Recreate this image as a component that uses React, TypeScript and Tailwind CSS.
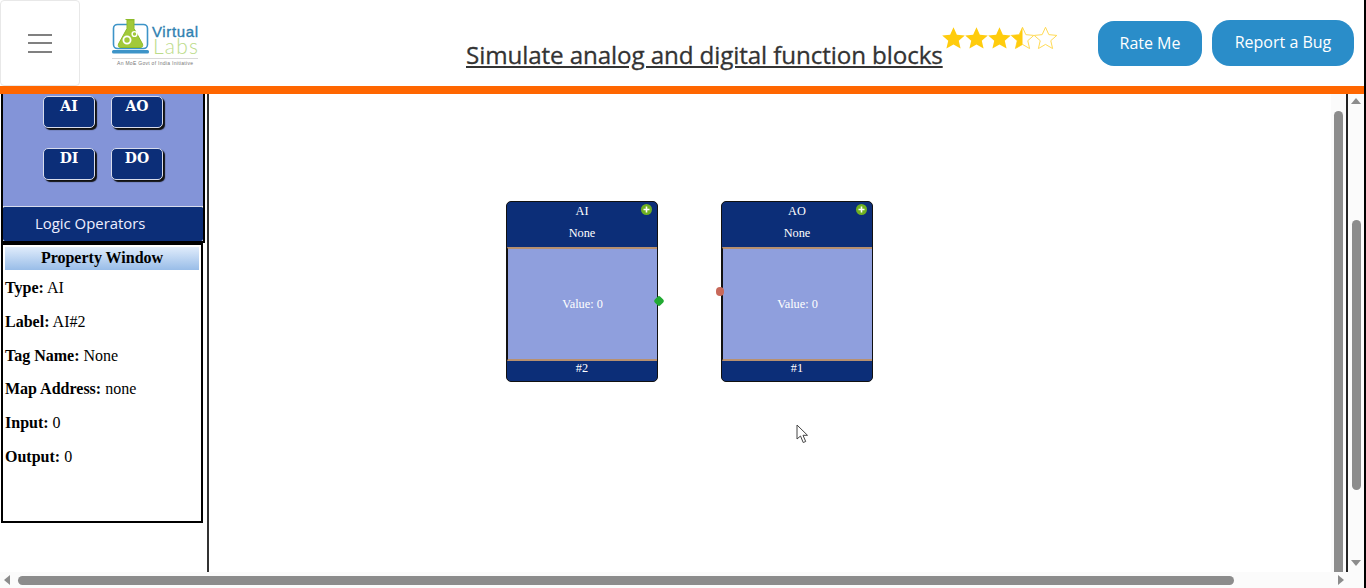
import React from "react";

const Star = ({ kind }: { kind: "full" | "half" | "empty" }) => {
  const d = "M12 0.8l3.5 7.7 8.3.8-6.3 5.5 1.9 8.2L12 18.7l-7.4 4.3 1.9-8.2L.2 9.3l8.3-.8z";
  return (
    <svg width="23" height="24" viewBox="0 0 24 24" className="shrink-0">
      <defs>
        <clipPath id="halfClip"><rect x="0" y="0" width="12" height="24" /></clipPath>
      </defs>
      {kind === "full" && <path d={d} fill="#ffcc0d" />}
      {kind !== "full" && <path d={d} fill="#fff" stroke="#ffd84d" strokeWidth="1" />}
      {kind === "half" && <path d={d} fill="#ffcc0d" clipPath="url(#halfClip)" />}
    </svg>
  );
};

const Logo = () => (
  <svg width="90" height="50" viewBox="0 0 90 50" className="shrink-0">
    <rect x="1.5" y="6.5" width="34" height="24" rx="4" fill="none" stroke="#3d94c8" strokeWidth="1.6" />
    <rect x="0" y="32" width="37" height="3.4" rx="1.5" fill="#3d94c8" />
    <path d="M13.5 1.5h9M15 2v8.5L6.5 26q-1 3.5 2.5 3.5h19q3.5 0 2.5-3.5L22 10.5V2z" fill="#a2c93a" stroke="#8dbb2b" strokeWidth="1" />
    <circle cx="15" cy="22" r="3.6" fill="none" stroke="#fff" strokeWidth="1.8" />
    <circle cx="22.5" cy="16" r="2.4" fill="none" stroke="#fff" strokeWidth="1.4" />
    <text x="40" y="19" fontFamily="'Liberation Sans', sans-serif" fontSize="15" fontWeight="400" fill="#2f7fb0" stroke="#2f7fb0" strokeWidth="0.35" textLength="46">Virtual</text>
    <text x="41" y="36" fontFamily="'Lato', sans-serif" fontSize="21" fontWeight="300" fill="#bcdc8a" textLength="45">Labs</text>
    <rect x="0" y="40" width="86" height="1" fill="#d9d9d9" />
    <text x="5" y="47" fontFamily="'Liberation Sans', sans-serif" fontSize="5" fill="#777" textLength="76">An MoE Govt of India Initiative</text>
  </svg>
);

const PaletteButton = ({ label }: { label: string }) => (
  <div className="w-[52px] h-[32px] rounded-[5px] bg-[#0c2e78] border border-[#d8dcec] shadow-[2px_2px_1px_#111] text-center text-white text-[14px] font-bold leading-[19px] font-['DejaVu_Serif',serif]">
    {label}
  </div>
);

const Prop = ({ k, v }: { k: string; v: string }) => (
  <p className="h-[33.8px] leading-[18px] text-[16px] text-black font-['Liberation_Serif',serif] whitespace-nowrap">
    <b>{k}:</b> {v}
  </p>
);

const Plus = () => (
  <span className="absolute right-[5px] top-[2px] w-[11px] h-[11px] rounded-full bg-[#6fb020] flex items-center justify-center">
    <svg width="7" height="7" viewBox="0 0 7 7"><path d="M3.5 0.5v6M0.5 3.5h6" stroke="#fff" strokeWidth="1.6" /></svg>
  </span>
);

const Block = ({ title, id, className, children }: { title: string; id: string; className: string; children: React.ReactNode }) => (
  <div className={`absolute top-[107px] w-[152px] h-[181px] ${className}`}>
    <div className="relative w-full h-full flex flex-col rounded-[5px] overflow-hidden border border-[#111] bg-[#0c2e78] text-white text-[12.3px] font-['Liberation_Serif',serif] text-center">
      <Plus />
      <div className="h-[45px] shrink-0">
        <div className="h-[19px] leading-[18px]">{title}</div>
        <div className="h-[22px] leading-[24px]">None</div>
      </div>
      <div className="flex-1 bg-[#8f9fdd] border-y-2 border-y-[#b8906f] border-l border-l-[#111] flex items-center justify-center">Value: 0</div>
      <div className="h-[20px] shrink-0 leading-[14px]">{id}</div>
    </div>
    {children}
  </div>
);

export default function App() {
  return (
    <div className="w-[1366px] h-[588px] overflow-hidden flex bg-white font-['Liberation_Sans',sans-serif]">
      <div className="w-[1364px] h-full flex flex-col shrink-0">
        {/* header */}
        <header className="h-[86px] shrink-0 flex items-start bg-white">
          <div className="w-[80px] h-[86px] shrink-0 rounded-[4px] border border-[#e8e8e8] flex flex-col items-center justify-center gap-[6.5px]">
            <span className="block w-[24px] h-[2px] bg-[#808080]" />
            <span className="block w-[24px] h-[2px] bg-[#808080]" />
            <span className="block w-[24px] h-[2px] bg-[#808080]" />
          </div>
          <div className="ml-[32px] mt-[18px]"><Logo /></div>
          <h1 className="ml-[264px] mt-[39px] w-[480px] text-[24.2px] leading-[32px] font-normal tracking-[-0.11px] [-webkit-text-stroke:0.3px_#333] text-[#333] underline font-['Open_Sans',sans-serif] whitespace-nowrap">
            Simulate analog and digital function blocks
          </h1>
          <div className="flex mt-[26px] -ml-[4px]">
            <Star kind="full" />
            <Star kind="full" />
            <Star kind="full" />
            <Star kind="half" />
            <Star kind="empty" />
          </div>
          <div className="ml-[41px] mt-[21px] w-[104px] h-[45px] rounded-[16px] bg-[#2a8dc9] text-white text-[16px] flex items-center justify-center font-['Open_Sans',sans-serif] pb-[1px]">Rate Me</div>
          <div className="ml-[10px] mt-[20px] w-[142px] h-[46px] rounded-[18px] bg-[#2a8dc9] text-white text-[16px] flex items-center justify-center font-['Open_Sans',sans-serif] pb-[2px]">Report a Bug</div>
        </header>
        <div className="h-[8px] shrink-0 bg-[#ff6600]" />

        {/* workspace */}
        <div className="h-[478px] shrink-0 flex">
          <aside className="w-[207px] shrink-0 flex flex-col">
            <div className="ml-[1px] w-[204px] h-[149px] shrink-0 border-x-2 border-b-2 border-black flex flex-col">
              <div className="h-[112px] shrink-0 bg-[#8394d8] grid grid-cols-[52px_52px] gap-x-[16px] gap-y-[20px] pl-[40px] pt-[2px] content-start">
                <PaletteButton label="AI" />
                <PaletteButton label="AO" />
                <PaletteButton label="DI" />
                <PaletteButton label="DO" />
              </div>
              <div className="flex-1 bg-[#0c2e78] border-t border-[#d8dcec] rounded-[2px] text-[#eef] text-[14.9px] flex items-center pl-[32px] pb-[2px] font-['Open_Sans',sans-serif]">
                Logic Operators
              </div>
            </div>
            <div className="ml-[1px] w-[202px] h-[280px] shrink-0 border-2 border-black">
              <div className="mx-[2px] mt-[2px] h-[23px] bg-gradient-to-b from-[#e0ecfb] to-[#99bde8] text-center text-[16px] font-bold text-black leading-[22px] font-['Liberation_Serif',serif] mb-[9px]">
                Property Window
              </div>
              <div className="pl-[2px]">
                <Prop k="Type" v="AI" />
                <Prop k="Label" v="AI#2" />
                <Prop k="Tag Name" v="None" />
                <Prop k="Map Address" v="none" />
                <Prop k="Input" v="0" />
                <Prop k="Output" v="0" />
              </div>
            </div>
          </aside>
          <div className="w-[2px] shrink-0 bg-[#333]" />

          {/* canvas */}
          <main className="relative w-[1122px] shrink-0 bg-white">
            <Block title="AI" id="#2" className="left-[297px]">
              <span className="absolute right-[-5px] top-[96px] w-[8px] h-[8px] rotate-45 rounded-[2px] bg-[#22aa33]" />
            </Block>
            <Block title="AO" id="#1" className="left-[512px]">
              <span className="absolute left-[-5px] top-[86px] w-[8px] h-[9px] rounded-full bg-[#c8695a]" />
            </Block>
            <svg width="13" height="20" viewBox="0 0 13 20" className="absolute left-[587px] top-[330px]">
              <path d="M1 1v14l3.5-3 2.7 6.5 2.5-1-2.7-6.2h4.5z" fill="#fff" stroke="#444" strokeWidth="1" strokeLinejoin="round" />
            </svg>
          </main>

          {/* inner vertical scrollbar */}
          <div className="w-[15px] shrink-0 bg-[#fbfbfb] pl-[3px] pt-[17px]">
            <div className="w-[9px] h-[461px] bg-[#8c8c8c] rounded-t-[5px]" />
          </div>
          <div className="w-[2px] shrink-0 bg-[#222]" />

          {/* outer vertical scrollbar */}
          <div className="w-[16px] shrink-0 bg-[#fbfbfb] flex flex-col items-center">
            <svg width="10" height="6" viewBox="0 0 10 6" className="mt-[4px]"><path d="M5 0l5 6H0z" fill="#8c8c8c" /></svg>
            <div className="w-[9px] h-[270px] mt-[116px] bg-[#8c8c8c] rounded-[5px]" />
            <svg width="10" height="6" viewBox="0 0 10 6" className="mt-[70px]"><path d="M5 6L0 0h10z" fill="#8c8c8c" /></svg>
          </div>
        </div>

        {/* horizontal scrollbar */}
        <div className="h-[16px] shrink-0 bg-[#fbfbfb] flex items-center">
          <svg width="6" height="10" viewBox="0 0 6 10" className="ml-[4px]"><path d="M0 5l6-5v10z" fill="#8c8c8c" /></svg>
          <div className="ml-[8px] w-[1216px] h-[9px] bg-[#8c8c8c] rounded-[5px]" />
          <svg width="6" height="10" viewBox="0 0 6 10" className="ml-[104px]"><path d="M6 5L0 0v10z" fill="#8c8c8c" /></svg>
        </div>
      </div>
      <div className="w-[2px] h-full shrink-0 bg-black" />
    </div>
  );
}
